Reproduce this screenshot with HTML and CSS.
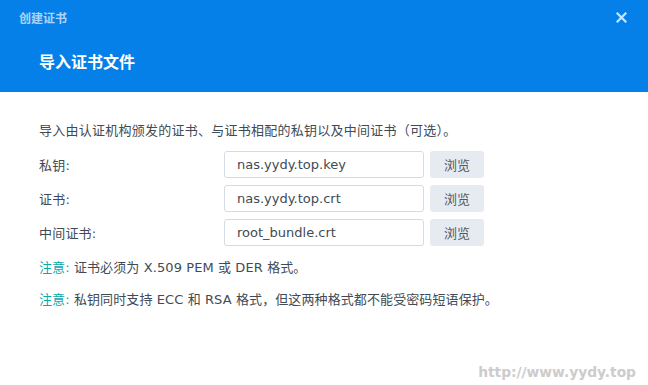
FILE: index.html
```html
<!DOCTYPE html>
<html lang="zh-CN">
<head>
<meta charset="utf-8">
<link rel="stylesheet" href="styles.css">
</head>
<body>
<div class="dialog">
  <div class="header">
    <div class="titlebar">
      <span class="title">创建证书</span>
      <svg class="close" width="11" height="11" viewBox="0 0 11 11"><path d="M1.5 1.5L9.5 9.5M9.5 1.5L1.5 9.5" stroke="#cfe5fb" stroke-width="2.2" stroke-linecap="square"/></svg>
    </div>
    <div class="subtitle">导入证书文件</div>
  </div>
  <div class="content">
    <p class="intro">导入由认证机构颁发的证书、与证书相配的私钥以及中间证书（可选）。</p>
    <div class="rows">
      <div class="row">
        <label class="label">私钥:</label>
        <div class="field">nas.yydy.top.key</div>
        <button class="browse">浏览</button>
      </div>
      <div class="row">
        <label class="label">证书:</label>
        <div class="field">nas.yydy.top.crt</div>
        <button class="browse">浏览</button>
      </div>
      <div class="row">
        <label class="label">中间证书:</label>
        <div class="field">root_bundle.crt</div>
        <button class="browse">浏览</button>
      </div>
    </div>
    <p class="note"><span class="note-key">注意:</span> 证书必须为 X.509 PEM 或 DER 格式。</p>
    <p class="note"><span class="note-key">注意:</span> 私钥同时支持 ECC 和 RSA 格式，但这两种格式都不能受密码短语保护。</p>
  </div>
  <div class="watermark">http://www.yydy.top</div>
</div>
</body>
</html>
```

FILE: styles.css
```css
* { box-sizing: border-box; }
html, body { margin: 0; padding: 0; background: #ffffff; }
body {
  font-family: "DejaVu Sans", "Noto Sans CJK SC", sans-serif;
  font-size: 13px;
  color: #414b55;
}
.dialog {
  width: 648px;
  height: 385px;
  position: relative;
  overflow: hidden;
  background: #ffffff;
}
.header {
  height: 92px;
  background: #0580e9;
  color: #ffffff;
}
.titlebar {
  height: 35px;
  display: flex;
  align-items: center;
  justify-content: space-between;
  padding: 0 21px 0 19px;
}
.title {
  font-family: "Noto Sans CJK SC", sans-serif;
  font-size: 12px;
  font-weight: 700;
  color: rgba(255,255,255,0.68);
}
.close { display: block; }
.subtitle {
  margin-top: 14px;
  padding-left: 39px;
  font-family: "Noto Sans CJK SC", sans-serif;
  font-size: 16px;
  font-weight: 700;
  line-height: 24px;
}
.content {
  padding: 29px 39px 0;
}
.intro {
  margin: 0;
  line-height: 20px;
  letter-spacing: 0.25px;
}
.rows {
  margin-top: 10px;
  display: flex;
  flex-direction: column;
  gap: 7px;
}
.row {
  display: flex;
  align-items: center;
  height: 27px;
}
.label {
  width: 185px;
  flex: none;
  letter-spacing: 0.2px;
}
.field {
  width: 200px;
  height: 27px;
  border: 1px solid #d3dce6;
  border-radius: 3px;
  padding-left: 12px;
  display: flex;
  align-items: center;
  font-size: 13px;
  color: #414b55;
}
.browse {
  margin-left: 6px;
  width: 54px;
  height: 27px;
  border: none;
  border-radius: 3px;
  background: #e6ebf2;
  color: #505a64;
  font-family: "Noto Sans CJK SC", sans-serif;
  font-size: 13px;
  padding: 0;
}
.note {
  margin: 12px 0 0;
  line-height: 20px;
  letter-spacing: 0.1px;
}
.note-key { color: #0ba8a8; }
.watermark {
  position: absolute;
  right: 12px;
  bottom: 5px;
  font-family: "DejaVu Sans", sans-serif;
  font-weight: 700;
  font-size: 13.8px;
  color: #cccccc;
}
```
